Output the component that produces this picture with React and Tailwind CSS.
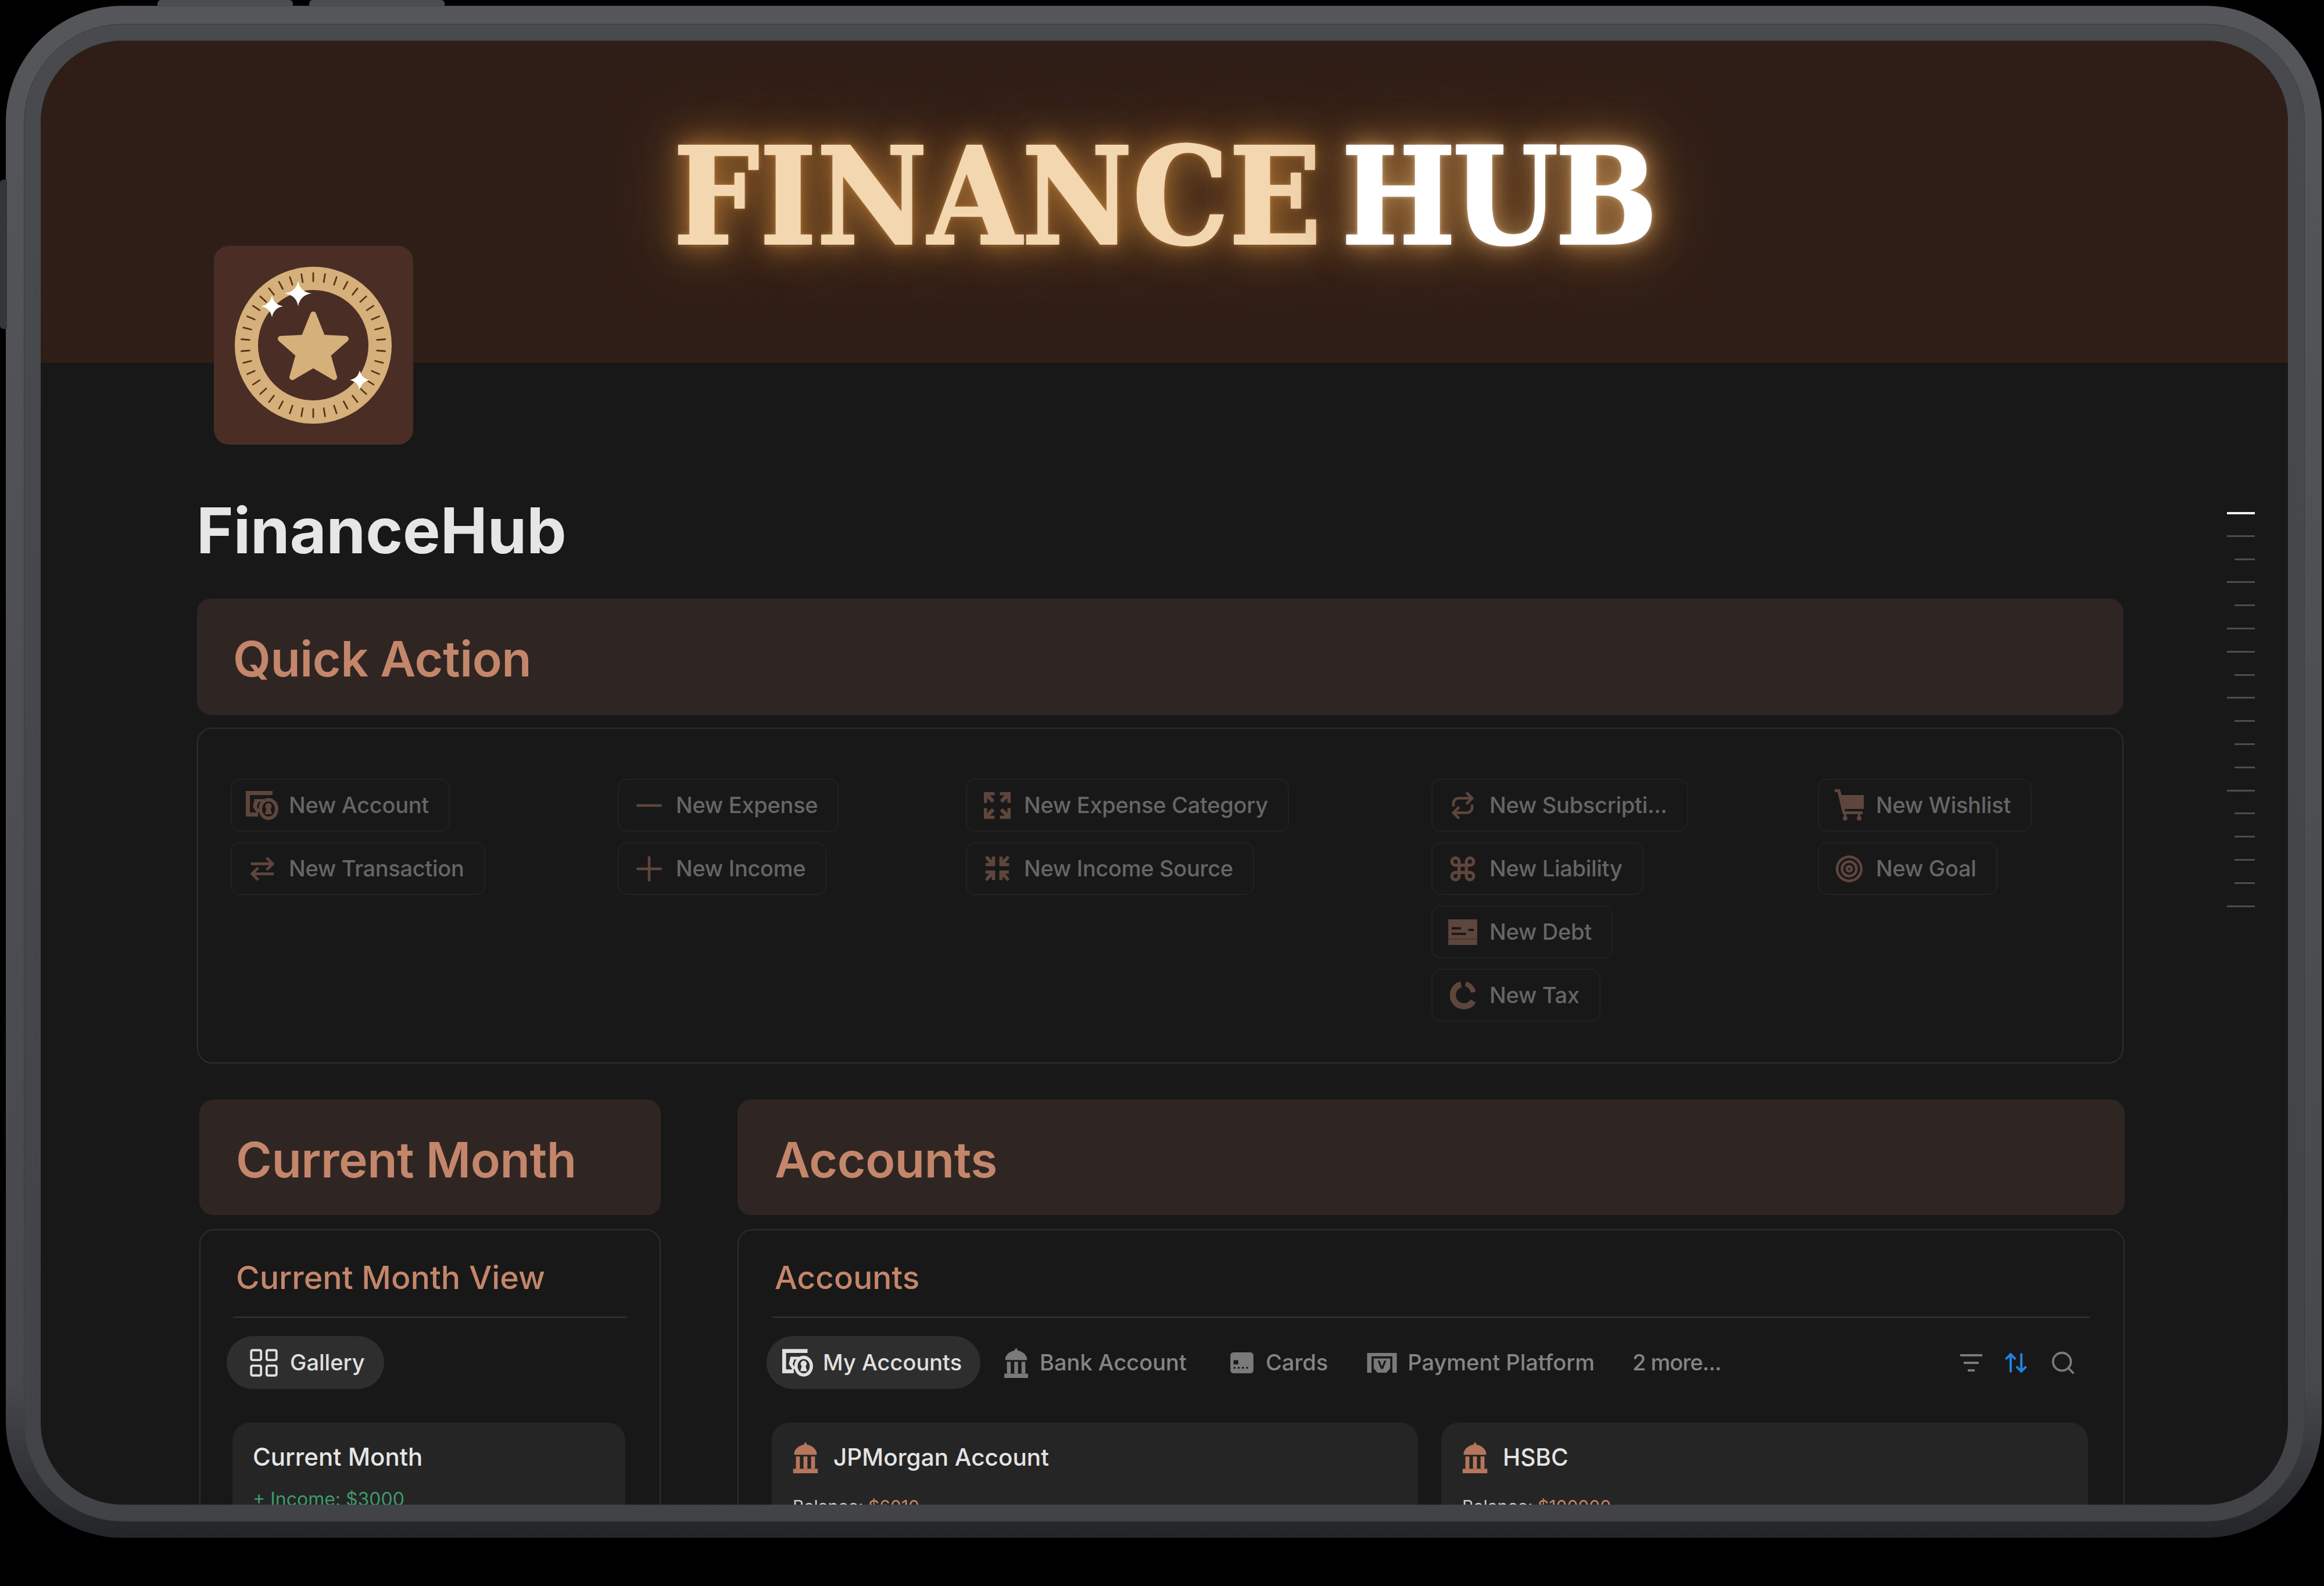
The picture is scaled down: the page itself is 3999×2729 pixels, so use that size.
import { Minus, Plus, Command, Target, LayoutGrid, Search, ArrowUpDown } from 'lucide-react'

const coinTicks = Array.from({ length: 38 }, (_, i) => (i * 360) / 38)

function Coin() {
  return (
    <svg viewBox="0 0 343 342" className="w-full h-full">
      <circle cx="171" cy="171" r="115" fill="none" stroke="#d6b07a" strokeWidth="40" />
      {coinTicks.map((a) => (
        <line key={a} x1="171" y1="47" x2="171" y2="61" stroke="#5a3418" strokeWidth="2.800" strokeLinecap="round" transform={`rotate(${a} 171 171)`} />
      ))}
      <path d="M171 118 L187 158 L227 160 L196 187 L207 226 L171 205 L135 226 L146 187 L115 160 L155 158 Z" fill="#d6b07a" stroke="#d6b07a" strokeWidth="10" strokeLinejoin="round" />
      <path d="M145 60 Q148 79 168 82 Q148 85 145 104 Q142 85 122 82 Q142 79 145 60Z" fill="#fff" />
      <path d="M100 85 Q103 101 119 104 Q103 107 100 123 Q97 107 81 104 Q97 101 100 85Z" fill="#fff" />
      <path d="M251 214 Q254 228 268 231 Q254 234 251 248 Q248 234 234 231 Q248 228 251 214Z" fill="#fff" />
    </svg>
  )
}

function AccountIcon({ className }) {
  return (
    <svg viewBox="0 0 56 50" className={className} fill="currentColor">
      <path d="M0 0h46v7H7v30h14v7H0z" />
      <path d="M15 14h16v5H22l-3 8 5 8-5 3-7-11z" />
      <path fillRule="evenodd" d="M39 12a17 19 0 1 1 0 38 17 19 0 0 1 0-38zm0 6a11 13 0 1 0 0 26 11 13 0 0 0 0-26z" />
      <path d="M39 21a5.500 5.500 0 0 1 3.500 9.700l2.500 9.300H33l2.500-9.300A5.500 5.500 0 0 1 39 21z" />
    </svg>
  )
}

function ExpandIcon({ className, inward }) {
  const d = inward
    ? 'M2 4l4-4 9 9V2h6v18H3v-6h7L2 4zM44 0l4 4-8 10h7v6H29V2h6v7l9-9zM2 44l8-10H3v-6h18v18h-6v-7l-9 9-4-4zM48 44l-4 4-9-9v7h-6V28h18v6h-7l8 10z'
    : 'M0 0h20v6h-9l9 9-5 5-9-9v9H0V0zM30 0h20v20h-6v-9l-9 9-5-5 9-9h-9V0zM0 30h6v9l9-9 5 5-9 9h9v6H0V30zM35 30l9 9v-9h6v20H30v-6h9l-9-9 5-5z'
  return (
    <svg viewBox="0 0 50 50" className={className} fill="currentColor">
      <path d={d} />
    </svg>
  )
}

function SwapIcon({ className }) {
  return (
    <svg viewBox="0 0 46 46" className={className} fill="none" stroke="currentColor" strokeWidth="5">
      <path d="M3 14H42M31 3l11 11-11 11" />
      <path d="M44 32H5M16 21L5 32l11 11" />
    </svg>
  )
}

function RepeatIcon({ className }) {
  return (
    <svg viewBox="0 0 44 56" className={className} fill="none" stroke="currentColor" strokeWidth="5">
      <path d="M4 30v-6a10 10 0 0 1 10-10h26M29 3l11 11-11 11" />
      <path d="M40 26v6a10 10 0 0 1-10 10H4M15 31L4 42l11 11" />
    </svg>
  )
}

function CartIcon({ className }) {
  return (
    <svg viewBox="0 0 50 56" className={className} fill="currentColor">
      <path d="M0 0h9l3 10h38v24H17l1 4h30v5H14L5 5H0z" />
      <circle cx="18" cy="50" r="4" />
      <circle cx="42" cy="50" r="4" />
      <rect x="16" y="43" width="4" height="8" />
      <rect x="40" y="43" width="4" height="8" />
    </svg>
  )
}

function DebtIcon({ className }) {
  return (
    <svg viewBox="0 0 52 46" className={className}>
      <rect width="52" height="46" fill="currentColor" />
      <rect x="6" y="14" width="17" height="4" fill="#181818" />
      <rect x="6" y="24" width="26" height="4" fill="#181818" />
      <rect x="36" y="17" width="10" height="4" fill="#181818" />
      <rect x="0" y="34" width="52" height="2" fill="#181818" opacity="0.3" />
    </svg>
  )
}

function TaxIcon({ className }) {
  return (
    <svg viewBox="0 0 46 52" className={className} fill="none" stroke="currentColor">
      <path d="M20 6a20 20 0 1 0 22 30" strokeWidth="11" />
      <path d="M28 5a20 20 0 0 1 14 15" strokeWidth="9" />
    </svg>
  )
}

function BankIcon({ className }) {
  return (
    <svg viewBox="0 0 44 56" className={className} fill="currentColor">
      <path d="M22 0l3 5c9 2 15 7 17 14v4H2v-4C4 12 10 7 19 5z" />
      <rect x="5" y="26" width="7" height="22" />
      <rect x="18.500" y="26" width="7" height="22" />
      <rect x="32" y="26" width="7" height="22" />
      <rect x="0" y="48" width="44" height="8" />
    </svg>
  )
}

function CardIcon({ className }) {
  return (
    <svg viewBox="0 0 44 40" className={className}>
      <rect width="44" height="40" rx="6" fill="currentColor" />
      <rect x="6" y="15" width="9" height="8" fill="#181818" />
      <rect x="6" y="28" width="4" height="3" fill="#181818" />
      <rect x="14" y="28" width="4" height="3" fill="#181818" />
      <rect x="22" y="28" width="4" height="3" fill="#181818" />
      <rect x="30" y="28" width="4" height="3" fill="#181818" />
    </svg>
  )
}

function PaymentIcon({ className }) {
  return (
    <svg viewBox="0 0 54 36" className={className} fill="currentColor">
      <path fillRule="evenodd" d="M0 0h54v6H0zM0 6h8v30H0zM46 6h8v30h-8zM12 10h30v18l-7 8H19l-7-8z" />
      <path d="M19 14h4l4 11 4-11h4l-6 15h-4z" fill="#181818" />
    </svg>
  )
}

function FilterIcon() {
  return (
    <svg viewBox="0 0 38 38" className="w-[38px] h-[38px]" fill="#7a7a7a">
      <rect x="0" y="4" width="38" height="4" />
      <rect x="6" y="17" width="26" height="4" />
      <rect x="13" y="30" width="12" height="4" />
    </svg>
  )
}

function QuickBtn({ icon, label }) {
  return (
    <div className="flex items-center h-[91px] pl-[24px] pr-[34px] gap-[18px] rounded-[16px] border-2 border-[#212121] text-[#666666] text-[38px] font-medium tracking-[-0.3px] whitespace-nowrap">
      <span className="w-[56px] h-[56px] flex items-center justify-center text-[#5e463c] shrink-0">{icon}</span>
      {label}
    </div>
  )
}

function Callout({ children, className }) {
  return (
    <div className={`flex items-center h-[199px] pl-[62px] pt-[8px] bg-[#2f2623] rounded-[24px] text-[#c4866a] text-[84px] font-[560] tracking-[-0.5px] ${className}`}>
      {children}
    </div>
  )
}

function AccountCard({ name, balance, width }) {
  return (
    <div className={`${width} h-[300px] bg-[#252525] rounded-[30px] pl-[36px] pt-[28px]`}>
      <div className="flex items-center gap-[26px] h-[64px] text-[40.500px] font-medium text-[#e4e4e4]">
        <BankIcon className="w-[44px] h-[54px] text-[#b5765c]" />
        {name}
      </div>
      <div className="mt-[30px] text-[30px] text-[#c9c9c9]">
        Balance: <span className="text-[#c4866a]">{balance}</span>
      </div>
    </div>
  )
}

const ticks = [0, 1, 0, 1, 0, 1, 1, 0, 1, 0, 0, 0, 1, 0, 0, 0, 0, 1]

export default function App() {
  return (
    <div className="relative w-[3999px] h-[2729px] bg-black pl-[10px] pt-[10px] font-[Inter,sans-serif] overflow-hidden">
      {/* hardware buttons */}
      <div className="absolute left-[271px] top-0 w-[233px] h-[12px] rounded-t-[6px] bg-[#4b4d51]" />
      <div className="absolute left-[532px] top-0 w-[233px] h-[12px] rounded-t-[6px] bg-[#4b4d51]" />
      <div className="absolute left-0 top-[309px] w-[12px] h-[257px] rounded-l-[6px] bg-[#34363a]" />

      <div className="w-[3985px] h-[2636px] rounded-[200px] bg-linear-to-b from-[#54565a] via-[#46484c] via-90% to-[#242528] pt-[31px] pl-[31px] pr-[29px] pb-[28px]">
        <div className="w-full h-full flex flex-col rounded-[170px] border border-[#3a3c40] bg-linear-to-b from-[#484a4e] to-[#424346] p-[28px]">
          <div className="relative flex-1 min-h-0 flex flex-col overflow-hidden rounded-[140px] bg-[#181818]">
            <header className="h-[554px] shrink-0 bg-[#2f1e17] flex justify-center items-start pt-[118px] gap-[34px] font-['DejaVu_Serif_Condensed','DejaVu_Serif',serif] font-bold text-[230px] leading-[300px]">
              <span className="text-[#f3d7b0] tracking-[1.500px] [-webkit-text-stroke:4px_#f3d7b0] [text-shadow:0_0_10px_#c98a45,0_0_40px_#a06a30,0_0_70px_#a06a30,0_0_130px_#8a5a2a]">FINANCE</span>
              <span className="text-white tracking-[-4px] [-webkit-text-stroke:4px_#ffffff] [text-shadow:0_0_10px_#e8c9a0,0_0_40px_#b58a5a,0_0_70px_#a06a30,0_0_130px_#8a5a2a]">HUB</span>
            </header>

            <div className="shrink-0 w-[343px] h-[342px] ml-[298px] -mt-[201px] bg-[#4a2e26] rounded-[26px]">
              <Coin />
            </div>

            <h1 className="ml-[268px] mt-[83px] h-[130px] leading-[130px] text-[108.500px] font-bold text-[#e6e6e6] shrink-0">FinanceHub</h1>

            <div className="ml-[269px] w-[3315px] shrink-0">
              <Callout className="mt-[52px] !h-[200px]">Quick Action</Callout>
              <div className="mt-[22px] h-[578px] rounded-[26px] border-2 border-[#2e2e2e] pl-[56px] pt-[86px] flex">
                <div className="w-[666px] flex flex-col items-start gap-[18px]">
                  <QuickBtn icon={<AccountIcon className="w-[56px] h-[50px]" />} label="New Account" />
                  <QuickBtn icon={<SwapIcon className="w-[44px] h-[44px]" />} label="New Transaction" />
                </div>
                <div className="w-[599px] flex flex-col items-start gap-[18px]">
                  <QuickBtn icon={<Minus className="w-[68px] h-[68px] shrink-0" strokeWidth={1.6} />} label="New Expense" />
                  <QuickBtn icon={<Plus className="w-[68px] h-[68px] shrink-0" strokeWidth={1.6} />} label="New Income" />
                </div>
                <div className="w-[801px] flex flex-col items-start gap-[18px]">
                  <QuickBtn icon={<ExpandIcon className="w-[46px] h-[46px]" />} label="New Expense Category" />
                  <QuickBtn icon={<ExpandIcon inward className="w-[46px] h-[46px]" />} label="New Income Source" />
                </div>
                <div className="w-[665px] flex flex-col items-start gap-[18px]">
                  <QuickBtn icon={<RepeatIcon className="w-[44px] h-[50px]" />} label="New Subscripti..." />
                  <QuickBtn icon={<Command className="w-[50px] h-[50px]" strokeWidth={2.6} />} label="New Liability" />
                  <QuickBtn icon={<DebtIcon className="w-[50px] h-[44px]" />} label="New Debt" />
                  <QuickBtn icon={<TaxIcon className="w-[44px] h-[50px]" />} label="New Tax" />
                </div>
                <div className="flex flex-col items-start gap-[18px]">
                  <QuickBtn icon={<CartIcon className="w-[50px] h-[56px]" />} label="New Wishlist" />
                  <QuickBtn icon={<Target className="w-[50px] h-[50px]" strokeWidth={2.2} />} label="New Goal" />
                </div>
              </div>
            </div>

            <div className="mt-[62px] ml-[273px] flex items-start gap-[132px] shrink-0">
              <section className="w-[794px]">
                <Callout className="!pl-[63px]">Current Month</Callout>
                <div className="mt-[24px] h-[700px] rounded-[26px] border-2 border-[#2e2e2e] px-[56px] pt-[48px]">
                  <h2 className="pl-[5px] h-[66px] leading-[66px] text-[55.500px] font-medium text-[#c4866a]">Current Month View</h2>
                  <div className="mt-[34px] h-[3px] bg-[#2c2c2c]" />
                  <div className="mt-[31px] -ml-[11px] inline-flex items-center h-[91px] w-[271px] pl-[35px] gap-[16px] rounded-full bg-[#2e2e2e] text-[38px] font-medium text-[#e0e0e0]">
                    <LayoutGrid className="w-[58px] h-[58px]" strokeWidth={1.6} />
                    Gallery
                  </div>
                  <div className="mt-[58px] -ml-[1px] w-[676px] h-[300px] rounded-[30px] bg-[#252525] pl-[35px] pt-[28px]">
                    <div className="h-[62px] leading-[62px] text-[42px] font-medium text-[#e6e6e6]">Current Month</div>
                    <div className="mt-[20px] h-[44px] leading-[44px] text-[32px] text-[#3f9a6b]">+ Income: $3000</div>
                  </div>
                </div>
              </section>

              <section className="w-[2387px]">
                <Callout className="!pl-[64px]">Accounts</Callout>
                <div className="mt-[24px] h-[700px] rounded-[26px] border-2 border-[#2e2e2e] pl-[57px] pr-[58px] pt-[48px]">
                  <h2 className="pl-[5px] h-[66px] leading-[66px] text-[55px] font-medium text-[#c4866a]">Accounts</h2>
                  <div className="mt-[34px] h-[3px] bg-[#2c2c2c]" />
                  <div className="mt-[31px] -ml-[9px] h-[91px] flex items-center text-[38px] font-medium text-[#858585]">
                    <div className="flex items-center h-[91px] w-[368px] pl-[27px] gap-[17px] rounded-full bg-[#2e2e2e] text-[#e0e0e0]">
                      <AccountIcon className="w-[53px] h-[48px]" />
                      My Accounts
                    </div>
                    <div className="flex items-center gap-[19px] ml-[40px]">
                      <BankIcon className="w-[43px] h-[52px] text-[#7a7a7a]" />
                      Bank Account
                    </div>
                    <div className="flex items-center gap-[20px] ml-[74px]">
                      <CardIcon className="w-[42px] h-[36px] text-[#7a7a7a]" />
                      Cards
                    </div>
                    <div className="flex items-center gap-[18px] ml-[67px]">
                      <PaymentIcon className="w-[52px] h-[34px] text-[#7a7a7a]" />
                      Payment Platform
                    </div>
                    <span className="ml-[65px] tracking-[-1px]">2 more...</span>
                    <div className="ml-auto pr-[23px] flex items-center gap-[36px] text-[#7a7a7a]">
                      <FilterIcon />
                      <ArrowUpDown className="w-[44px] h-[50px] text-[#2383e2]" strokeWidth={2.2} />
                      <Search className="w-[46px] h-[46px]" strokeWidth={2} />
                    </div>
                  </div>
                  <div className="mt-[58px] flex gap-[40px]">
                    <AccountCard name="JPMorgan Account" balance="$6010" width="w-[1112px]" />
                    <AccountCard name="HSBC" balance="$100000" width="w-[1113px]" />
                  </div>
                </div>
              </section>
            </div>

            {/* page outline ticks */}
            <div className="absolute top-[811px] right-[57px] flex flex-col items-end gap-[36.800px]">
              {ticks.map((long, i) => (
                <div
                  key={i}
                  className={
                    i === 0
                      ? 'w-[48px] h-[4px] -mb-[1px] bg-[#f0f0f0]'
                      : long
                        ? 'w-[48px] h-[3px] bg-[#4d4d4d]'
                        : 'w-[35px] h-[3px] bg-[#4d4d4d]'
                  }
                />
              ))}
            </div>
          </div>
        </div>
      </div>
    </div>
  )
}
